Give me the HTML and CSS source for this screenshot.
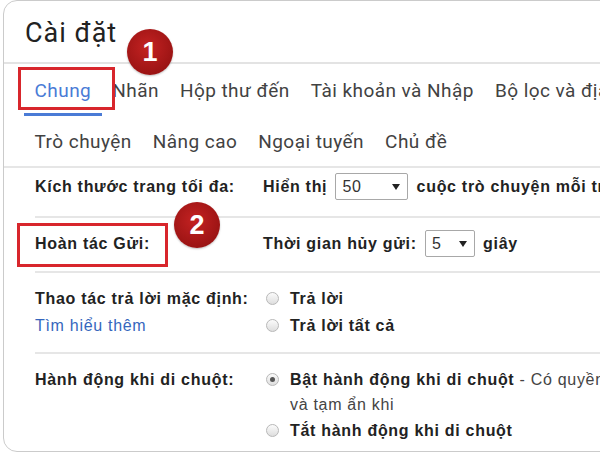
FILE: index.html
```html
<!DOCTYPE html>
<html lang="vi">
<head>
    <meta charset="UTF-8">
    <title>Cài đặt</title>
    <link rel="stylesheet" href="styles.css">
</head>
<body>
    <div class="card">
        <div class="card-head">
            <h1 class="title">Cài đặt</h1>
        </div>

        <nav class="tabs tabs-main">
            <a class="tab tab-active">Chung</a>
            <a class="tab">Nhãn</a>
            <a class="tab">Hộp thư đến</a>
            <a class="tab">Tài khoản và Nhập</a>
            <a class="tab">Bộ lọc và địa chỉ bị chặn</a>
        </nav>
        <nav class="tabs tabs-sub">
            <a class="tab">Trò chuyện</a>
            <a class="tab">Nâng cao</a>
            <a class="tab">Ngoại tuyến</a>
            <a class="tab">Chủ đề</a>
        </nav>

        <div class="settings">
            <div class="row row-page">
                <div class="label">Kích thước trang tối đa:</div>
                <div class="value">
                    Hiển thị
                    <span class="select select-wide">
                        <span>50</span>
                        <svg class="caret" width="8" height="6" viewBox="0 0 8 6"><path d="M0 0h8L4 6z"/></svg>
                    </span>
                    cuộc trò chuyện mỗi trang
                </div>
            </div>

            <div class="row row-undo">
                <div class="label">Hoàn tác Gửi:</div>
                <div class="value">
                    Thời gian hủy gửi:
                    <span class="select select-narrow">
                        <span>5</span>
                        <svg class="caret" width="8" height="6" viewBox="0 0 8 6"><path d="M0 0h8L4 6z"/></svg>
                    </span>
                    giây
                </div>
            </div>

            <div class="row row-reply">
                <div class="label">
                    Thao tác trả lời mặc định:
                    <a class="link">Tìm hiểu thêm</a>
                </div>
                <div class="value">
                    <div class="option"><span class="radio"></span>Trả lời</div>
                    <div class="option"><span class="radio"></span>Trả lời tất cả</div>
                </div>
            </div>

            <div class="row row-hover">
                <div class="label">Hành động khi di chuột:</div>
                <div class="value">
                    <div class="option"><span class="radio radio-on"></span>Bật hành động khi di chuột<span class="hint">&nbsp;- Có quyền truy cập nhanh vào các thao tác lưu trữ, xóa, đánh dấu là đã đọc</span></div>
                    <div class="hint-line">và tạm ẩn khi</div>
                    <div class="option"><span class="radio"></span>Tắt hành động khi di chuột</div>
                </div>
            </div>
        </div>

        <!-- callouts drawn over the screenshot -->
        <span class="mark mark-tab"></span>
        <span class="mark mark-undo"></span>
        <span class="badge badge-one">1</span>
        <span class="badge badge-two">2</span>
    </div>
</body>
</html>
```

FILE: styles.css
```css
body {
    margin: 0;
    background: #fff;
    color: #222;
    font-family: 'Liberation Sans', Arial, sans-serif;
    overflow: hidden;
}
.card {
    position: relative;
    margin-left: 3px;
    width: 700px;
    height: 452px;
    box-sizing: border-box;
    border: 1px solid #cbcbcb;
    border-radius: 14px;
    overflow: hidden;
}
.card-head {
    height: 61px;
    padding-left: 21px;
    border-bottom: 2px solid #e3e3e3;
}
.title {
    margin: 0;
    padding-top: 16px;
    font-family: Roboto, 'Liberation Sans', sans-serif;
    font-size: 27px;
    font-weight: 400;
    line-height: 32px;
    letter-spacing: 1px;
    color: #222;
}
.tabs {
    display: flex;
    padding-left: 20px;
    white-space: nowrap;
}
.tab {
    padding: 0 10.5px;
    font-family: Roboto, 'Liberation Sans', sans-serif;
    font-size: 19px;
    line-height: 22px;
    letter-spacing: 0.45px;
    color: #424242;
}
.tabs-main .tab {
    padding-top: 16px;
    padding-bottom: 11px;
    border-bottom: 3px solid transparent;
}
.tabs-main .tab-active {
    color: #4a7bd6;
    border-bottom-color: #4a7bd6;
}
.tabs-sub {
    border-bottom: 2px solid #e6e6e6;
}
.tabs-sub .tab {
    padding-top: 15px;
    padding-bottom: 13px;
}
.settings {
    margin-left: 31px;
}
.row {
    display: flex;
    border-bottom: 2px solid #e6e6e6;
    font-size: 16px;
    line-height: 27px;
    letter-spacing: 0.7px;
    white-space: nowrap;
}
.row-page {
    padding: 5px 0 16px;
}
.row-undo {
    padding: 12px 0 14px;
}
.row-reply {
    padding: 12px 0 13px;
}
.row-hover {
    padding: 12px 0 6px;
    border-bottom: none;
}
.label {
    display: flex;
    flex-direction: column;
    flex: none;
    width: 228px;
    font-weight: bold;
}
.link {
    font-weight: normal;
    color: #3566bd;
}
.value {
    font-weight: bold;
}
.select {
    display: inline-flex;
    align-items: center;
    justify-content: space-between;
    box-sizing: border-box;
    height: 27px;
    margin: 0 3px;
    padding: 0 7px 0 6px;
    border: 1px solid #a8a8a8;
    border-radius: 2px;
    vertical-align: top;
    font-weight: normal;
    color: #333;
    line-height: 25px;
}
.select-wide {
    width: 73px;
}
.select-narrow {
    width: 50px;
}
.caret {
    fill: #222;
}
.option {
    display: flex;
    align-items: center;
    height: 27px;
}
.radio {
    position: relative;
    flex: none;
    width: 13px;
    height: 13px;
    box-sizing: border-box;
    margin: 0 11px 0 3px;
    border: 1px solid #b8b8b8;
    border-radius: 50%;
    background: linear-gradient(#fbfbfb, #dedede);
}
.radio-on::after {
    content: '';
    position: absolute;
    left: 3px;
    top: 3px;
    width: 5px;
    height: 5px;
    border-radius: 50%;
    background: #555;
}
.hint {
    font-weight: normal;
    color: #444;
}
.hint-line {
    padding-left: 27px;
    font-weight: normal;
    line-height: 24px;
    color: #444;
}
.mark {
    position: absolute;
    box-sizing: border-box;
    border: 3px solid #d8262c;
}
.mark-tab {
    left: 14px;
    top: 66px;
    width: 97px;
    height: 43px;
}
.mark-undo {
    left: 13px;
    top: 222px;
    width: 151px;
    height: 44px;
}
.badge {
    position: absolute;
    width: 46px;
    height: 46px;
    border-radius: 50%;
    background: radial-gradient(circle at 45% 40%, #c42222, #9c1414 70%, #7e0e0e);
    box-shadow: 0 1px 2px rgba(0,0,0,0.25);
    color: #fff;
    font-size: 27px;
    font-weight: bold;
    line-height: 46px;
    text-align: center;
}
.badge-one {
    left: 123px;
    top: 28px;
}
.badge-two {
    left: 170px;
    top: 201px;
}
```
